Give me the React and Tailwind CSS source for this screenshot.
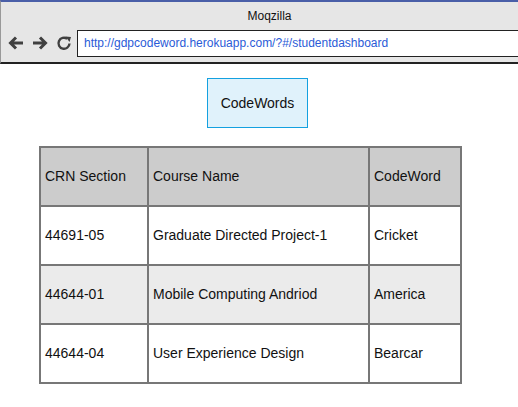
import React from "react";

const rows = [
  ["44691-05", "Graduate Directed Project-1", "Cricket", "bg-white"],
  ["44644-01", "Mobile Computing Andriod", "America", "bg-[#ebebeb]"],
  ["44644-04", "User Experience Design", "Bearcar", "bg-white"],
];

export default function App() {
  return (
    <div className="w-[518px] h-[407px] bg-white overflow-hidden" style={{ fontFamily: '"Liberation Sans", Arial, sans-serif' }}>
      <div className="h-[64px] bg-[#e6e6e6] border-t-[2px] border-t-[#4a5fa8] border-b-[2px] border-b-[#222] border-l border-l-[#999] flex flex-col">
        <div className="h-[27px] flex items-center justify-center text-[12px] text-[#111] pt-[1px] pl-[20px]">Moqzilla</div>
        <div className="flex items-center h-[28px]">
          <div className="flex items-center w-[76px] pl-[7px] gap-[8px]">
            <svg width="16" height="16" viewBox="0 0 16 16">
              <path d="M15 8H3M8 2.5L2.5 8 8 13.5" fill="none" stroke="#404040" strokeWidth="3" />
            </svg>
            <svg width="16" height="16" viewBox="0 0 16 16">
              <path d="M1 8h12M8 2.5L13.5 8 8 13.5" fill="none" stroke="#404040" strokeWidth="3" />
            </svg>
            <svg width="16" height="16" viewBox="0 0 16 16">
              <path d="M13.5 8.5A5.5 5.5 0 1 1 11.2 3.8" fill="none" stroke="#404040" strokeWidth="2.4" />
              <path d="M9.5 1.5L15 2l-1.5 5z" fill="#404040" />
            </svg>
          </div>
          <div className="flex-1 h-[27px] bg-white border border-[#222] border-r-0 flex items-center pl-[6px] text-[12px] text-[#2a5bd7]">
            http://gdpcodeword.herokuapp.com/?#/studentdashboard
          </div>
        </div>
      </div>
      <div className="flex justify-center pt-[14px] pr-[3px]">
        <div className="w-[101px] h-[50px] bg-[#e0f2fb] border border-[#14a1e0] flex items-center justify-center text-[14px] text-[#111]">
          CodeWords
        </div>
      </div>
      <div className="pt-[18px] pl-[39px]">
        <table className="border-collapse text-[14px] text-[#111]">
          <tbody>
            <tr className="bg-[#cccccc] h-[59px]">
              <td className="w-[108px] border-2 border-[#777] pl-[4px]">CRN Section</td>
              <td className="w-[221px] border-2 border-[#777] pl-[4px]">Course Name</td>
              <td className="w-[92px] border-2 border-[#777] pl-[4px]">CodeWord</td>
            </tr>
            {rows.map((r) => (
              <tr key={r[0]} className={`${r[3]} h-[59px]`}>
                <td className="border-2 border-[#777] pl-[4px]">{r[0]}</td>
                <td className="border-2 border-[#777] pl-[4px]">{r[1]}</td>
                <td className="border-2 border-[#777] pl-[4px]">{r[2]}</td>
              </tr>
            ))}
          </tbody>
        </table>
      </div>
    </div>
  );
}
